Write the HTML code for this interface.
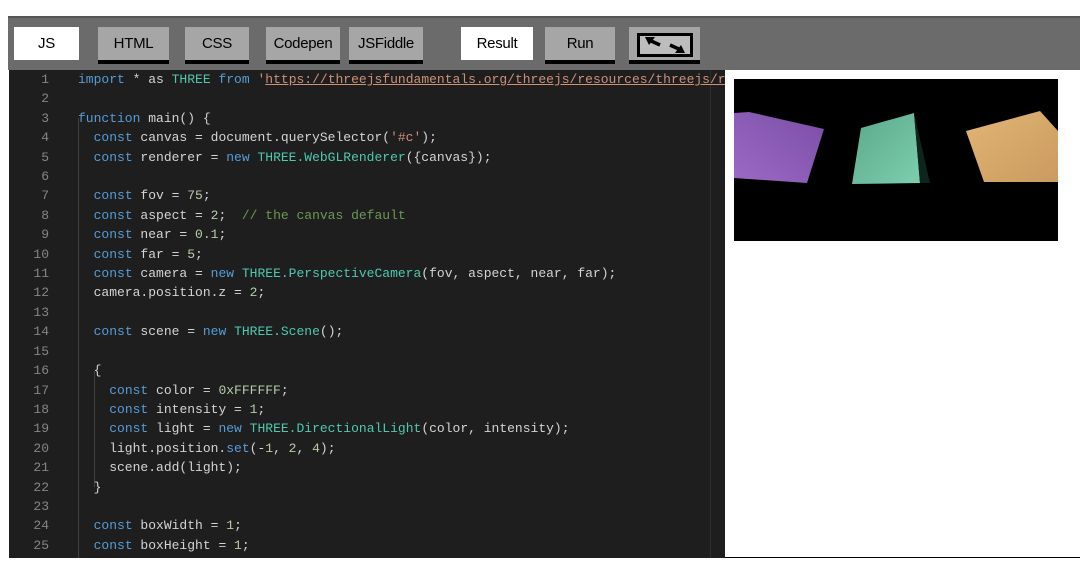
<!DOCTYPE html>
<html><head><meta charset="utf-8"><style>
*{margin:0;padding:0;box-sizing:border-box}
body{width:1080px;height:570px;background:#fff;position:relative;overflow:hidden;font-family:"Liberation Sans",sans-serif}
.bar{position:absolute;left:8px;top:16px;width:1072px;height:54px;background:#6b6b6b;border-top:2px solid #555}
.tab{position:absolute;top:27px;height:33px;background:#a6a6a6;font-size:15px;color:#000;text-align:center;line-height:33px;letter-spacing:-0.3px}
.w{background:#fff}
.ul{position:absolute;top:60px;height:4px;background:#000}
.ed{position:absolute;left:9px;top:70px;width:716px;height:488px;background:#1e1e1e;overflow:hidden}
.ln{position:absolute;left:0;width:40px;text-align:right;color:#858585;font:13px/19.4px "Liberation Mono",monospace}
.code{position:absolute;left:69px;top:0;white-space:pre;color:#d4d4d4;font:13px/19.4px "Liberation Mono",monospace}
.k{color:#569cd6}.c{color:#4ec9b0}.n{color:#b5cea8}.cm{color:#6a9955}.s{color:#ce9178}.f{color:#dcdcaa}
.g{position:absolute;width:1px;background:#404040}
</style></head><body>
<div class="bar"></div>
<div class="tab w" style="left:14px;width:65px">JS</div>
<div class="tab" style="left:98px;width:71px">HTML</div>
<div class="tab" style="left:185px;width:64px">CSS</div>
<div class="tab" style="left:266px;width:74px">Codepen</div>
<div class="tab" style="left:349px;width:74px">JSFiddle</div>
<div class="tab w" style="left:461px;width:72px">Result</div>
<div class="tab" style="left:545px;width:70px">Run</div>
<div class="tab" style="left:629px;width:71px"></div>
<div style="position:absolute;left:637px;top:33px;width:56px;height:24px;border:3px solid #000;background:#bdbdbd">
<svg width="50" height="18" viewBox="0 0 50 18" style="position:absolute;left:0;top:0">
<path d="M9 4 L20 9" stroke="#000" stroke-width="3.5"/><path d="M5 1 L15 1 L9 9 Z" fill="#000"/>
<path d="M30 9 L41 14" stroke="#000" stroke-width="3.5"/><path d="M45 17 L35 17 L41 9 Z" fill="#000"/>
</svg></div>
<div class="ul" style="left:98px;width:71px"></div>
<div class="ul" style="left:185px;width:64px"></div>
<div class="ul" style="left:266px;width:74px"></div>
<div class="ul" style="left:349px;width:74px"></div>
<div class="ul" style="left:545px;width:70px"></div>
<div class="ul" style="left:629px;width:71px"></div>

<div class="ed">
<div class="g" style="left:69px;top:48px;height:440px"></div>
<div class="g" style="left:85px;top:301px;height:116px"></div>
<div class="g" style="left:701px;top:0;height:488px;background:#2e2e2e"></div>
<div class="ln" style="top:0">1<br>2<br>3<br>4<br>5<br>6<br>7<br>8<br>9<br>10<br>11<br>12<br>13<br>14<br>15<br>16<br>17<br>18<br>19<br>20<br>21<br>22<br>23<br>24<br>25</div>
<div class="code"><span class="k">import</span> * as <span class="c">THREE</span> <span class="k">from</span> <span class="s">'<u>https://threejsfundamentals.org/threejs/resources/threejs/r</u></span>

<span class="k">function</span> main() {
  <span class="k">const</span> canvas = document.querySelector(<span class="s">'#c'</span>);
  <span class="k">const</span> renderer = <span class="k">new</span> <span class="c">THREE.WebGLRenderer</span>({canvas});

  <span class="k">const</span> fov = <span class="n">75</span>;
  <span class="k">const</span> aspect = <span class="n">2</span>;  <span class="cm">// the canvas default</span>
  <span class="k">const</span> near = <span class="n">0.1</span>;
  <span class="k">const</span> far = <span class="n">5</span>;
  <span class="k">const</span> camera = <span class="k">new</span> <span class="c">THREE.PerspectiveCamera</span>(fov, aspect, near, far);
  camera.position.z = <span class="n">2</span>;

  <span class="k">const</span> scene = <span class="k">new</span> <span class="c">THREE.Scene</span>();

  {
    <span class="k">const</span> color = <span class="n">0xFFFFFF</span>;
    <span class="k">const</span> intensity = <span class="n">1</span>;
    <span class="k">const</span> light = <span class="k">new</span> <span class="c">THREE.DirectionalLight</span>(color, intensity);
    light.position.<span class="k">set</span>(-<span class="n">1</span>, <span class="n">2</span>, <span class="n">4</span>);
    scene.add(light);
  }

  <span class="k">const</span> boxWidth = <span class="n">1</span>;
  <span class="k">const</span> boxHeight = <span class="n">1</span>;</div>
</div>
<div style="position:absolute;left:725px;top:557px;width:355px;height:1px;background:#000"></div>

<svg style="position:absolute;left:734px;top:79px" width="324" height="162" viewBox="0 0 324 162">
<defs>
<linearGradient id="p" x1="0" y1="1" x2="1" y2="0"><stop offset="0" stop-color="#9b6ac4"/><stop offset="1" stop-color="#7b4ea6"/></linearGradient>
<linearGradient id="t" x1="0" y1="0" x2="1" y2="1"><stop offset="0" stop-color="#5aa88a"/><stop offset="1" stop-color="#7dcfae"/></linearGradient>
<linearGradient id="o" x1="0" y1="0" x2="1" y2="1"><stop offset="0" stop-color="#e2b574"/><stop offset="1" stop-color="#c99c5f"/></linearGradient>
</defs>
<rect width="324" height="162" fill="#000"/>
<path d="M0 34 L15 33 L90 50 L73 104 L0 99 Z" fill="url(#p)"/>
<path d="M127 49 L180 34 L186 104 L118 105 Z" fill="url(#t)"/>
<path d="M180 34 L196 104 L186 104 Z" fill="#0f241d"/>
<path d="M232 52 L306 32 L324 52 L324 103 L250 103 Z" fill="url(#o)"/>
</svg>
</body></html>
